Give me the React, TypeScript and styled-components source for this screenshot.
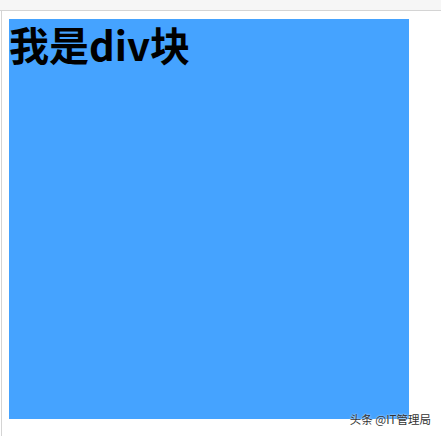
import React from 'react';
import styled, { createGlobalStyle } from 'styled-components';

const GlobalStyle = createGlobalStyle`
  html, body {
    margin: 0;
    padding: 0;
    background: #ffffff;
    font-family: "Microsoft YaHei", "Noto Sans CJK SC", "Noto Sans", sans-serif;
  }
`;

const Page = styled.div`
  position: relative;
  width: 441px;
  height: 436px;
  overflow: hidden;
  background: #ffffff;
`;

const TopBar = styled.div`
  height: 10px;
  background: #f6f6f6;
  border-bottom: 1px solid #d4d4d4;
`;

const Frame = styled.div`
  margin-left: 1px;
  border-left: 1px solid #d4d4d4;
  height: 425px;
  padding: 8px 0 0 7px;
  box-sizing: border-box;
`;

const Block = styled.div`
  width: 400px;
  height: 400px;
  background: #45a3ff;
`;

const Heading = styled.h1`
  margin: 0;
  font-size: 40px;
  font-weight: bold;
  line-height: 50px;
  color: #000000;
  font-family: "Noto Sans CJK SC", "Noto Sans", sans-serif;
`;

const Watermark = styled.div`
  position: absolute;
  right: 10px;
  bottom: 9px;
  font-size: 11.5px;
  color: #333333;
  font-family: "Noto Sans CJK SC", sans-serif;
  text-shadow: 0 0 2px #ffffff;
`;

export default function App() {
  return (
    <>
      <GlobalStyle />
      <Page>
        <TopBar />
        <Frame>
          <Block>
            <Heading>我是div块</Heading>
          </Block>
        </Frame>
        <Watermark>头条 @IT管理局</Watermark>
      </Page>
    </>
  );
}
